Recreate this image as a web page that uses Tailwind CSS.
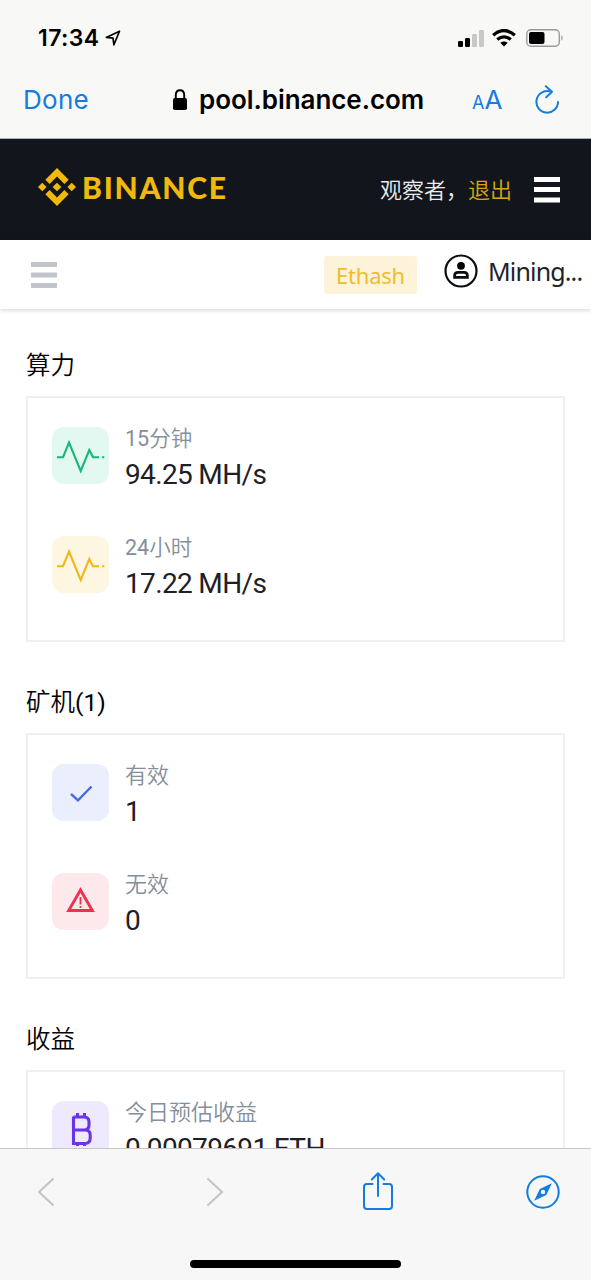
<!DOCTYPE html>
<html lang="zh-CN">
<head>
    <meta charset="UTF-8">
    <meta name="viewport" content="width=device-width, initial-scale=1.0">
    <title>Binance Pool</title>
    <script src="https://cdn.jsdelivr.net/npm/@tailwindcss/browser@4"></script>
</head>
<body class="bg-white">

<div class="w-[591px] h-[1280px] overflow-hidden flex flex-col font-['Roboto','Noto_Sans_CJK_SC',sans-serif] text-[#1e2026]">

    <!-- Browser top bar -->
    <div class="h-[139px] shrink-0 bg-[#f8f8f6] border-b border-[#a9b3b3] font-['Inter',sans-serif] text-black">
        <div class="h-[76px] pl-[38px] pr-[27px] flex items-center justify-between">
            <div class="flex items-center gap-[5px]">
                <span class="text-[23px] font-semibold tracking-[0.4px] leading-none">17:34</span>
                <svg class="w-4 h-4" viewBox="0 0 16 16" fill="none" stroke="black" stroke-width="1.7" stroke-linejoin="round"><path d="M14.5 1.2 L1.3 7.4 L8 8.1 L8.9 14.8 Z"/></svg>
            </div>
            <div class="flex items-center">
                <svg class="w-[27px] h-[17px]" viewBox="0 0 27 17">
                    <rect x="0" y="11" width="5" height="6" rx="1.3"/>
                    <rect x="7" y="8" width="5" height="9" rx="1.3"/>
                    <rect x="14" y="4" width="5" height="13" rx="1.3" fill="#c8c8c6"/>
                    <rect x="21" y="0" width="5" height="17" rx="1.3" fill="#c8c8c6"/>
                </svg>
                <svg class="w-6 h-[18px] ml-[7px] -mt-[1px]" viewBox="0 0 24 18" fill="none" stroke="black">
                    <path d="M1.2 6.2 Q12 -3 22.8 6.2" stroke-width="3.4"/>
                    <path d="M5.2 10.6 Q12 5 18.8 10.6" stroke-width="3.2"/>
                    <path d="M12 17.6 L8.3 13.8 Q12 11 15.7 13.8 Z" fill="black" stroke="none"/>
                </svg>
                <svg class="w-[38px] h-[18px] ml-[10px]" viewBox="0 0 38 18">
                    <rect x="0.8" y="0.8" width="32.5" height="16.4" rx="4" fill="none" stroke="#9b9b99" stroke-width="1.4"/>
                    <rect x="3" y="3" width="15.5" height="12" rx="2"/>
                    <path d="M35.4 6 q2.4 3 0 6 Z" fill="#8c8c8a"/>
                </svg>
            </div>
        </div>
        <div class="h-12 pl-[23px] pr-[30px] flex items-center">
            <span class="text-[26px] text-[#147ce0] w-[149px] tracking-[0.3px] -mt-[2px]">Done</span>
            <svg class="w-4 h-[21px] -mt-[1px]" viewBox="0 0 16 21"><rect x="1" y="9" width="14" height="12" rx="1.8"/><path d="M3.8 10 V6 Q3.8 1.2 8 1.2 Q12.2 1.2 12.2 6 V10" fill="none" stroke="black" stroke-width="1.9"/></svg>
            <span class="ml-[11px] -mt-[2px] text-[26px] font-[580] tracking-[-0.05px] w-[272px]">pool.binance.com</span>
            <span class="text-[#147ce0] flex items-baseline w-[64px] -mt-[2px] pl-[1px]"><span class="text-[18px]">A</span><span class="text-[26px] tracking-[-1px]">A</span></span>
            <svg class="w-6 h-[30px]" viewBox="0 0 24 30" fill="none" stroke="#147ce0" stroke-width="2" stroke-linecap="round" stroke-linejoin="round"><path d="M14.5 6.3 A10.8 10.8 0 1 0 23 17"/><path d="M10.8 1.2 L17 6.7 L11.2 12.2"/></svg>
        </div>
    </div>

    <!-- Site header -->
    <div class="h-[101px] shrink-0 bg-[#12161c] pl-[38px] pr-[31px] flex items-center">
        <svg class="w-[38px] h-[38px] -mt-[5px]" viewBox="0 0 126.6 126.6" fill="#f0b90b">
            <path d="M38.7 53.2 L63.3 28.6 L87.9 53.2 L102.2 38.9 L63.3 0 L24.4 38.9 Z"/>
            <path d="M0 63.3 L14.3 49 L28.6 63.3 L14.3 77.6 Z"/>
            <path d="M38.7 73.4 L63.3 98 L87.9 73.4 L102.2 87.7 L63.3 126.6 L24.4 87.7 Z"/>
            <path d="M98 63.3 L112.3 49 L126.6 63.3 L112.3 77.6 Z"/>
            <path d="M63.3 48.8 L77.8 63.3 L63.3 77.8 L48.8 63.3 Z"/>
        </svg>
        <span class="ml-[6px] -mt-[6px] w-[298px] font-['Lato',sans-serif] font-black text-[30px] tracking-[1.75px] leading-none text-[#f0b90b]">BINANCE</span>
        <span class="-mt-[4px] font-['Noto_Sans_CJK_SC',sans-serif] font-[350] text-[22px] leading-none text-[#eaecef] whitespace-nowrap w-[88px]">观察者，</span>
        <span class="-mt-[4px] font-['Noto_Sans_CJK_SC',sans-serif] font-[350] text-[22px] leading-none text-[#d9a60e] whitespace-nowrap">退出</span>
        <svg class="w-[26px] h-[27px] ml-auto" viewBox="0 0 26 27" fill="white"><path d="M0 1h26v5H0zM0 11h26v5H0zM0 21.5h26v5H0z"/></svg>
    </div>

    <!-- Account bar -->
    <div class="h-[69px] shrink-0 bg-white pl-[31px] flex items-center shadow-[0_2px_4px_rgba(0,0,0,0.13)]">
        <svg class="w-[26px] h-[26px]" viewBox="0 0 26 26" fill="#c1c5ca"><path d="M0 0h26v5H0zM0 10.5h26v5H0zM0 21h26v5H0z"/></svg>
        <div class="ml-[267px] w-[93px] h-[38px] rounded-[3px] bg-[#fcf3da] flex items-center justify-center font-['Noto_Sans',sans-serif] text-[22px] tracking-[-0.2px] text-[#f0bd2a] pt-[2px]">Ethash</div>
        <svg class="w-[34px] h-[34px] ml-[27px] -mt-[7px]" viewBox="0 0 34 34">
            <circle cx="17" cy="17" r="15.5" fill="none" stroke="#0b0e11" stroke-width="2.2"/>
            <circle cx="17" cy="11.8" r="3.9"/>
            <path d="M10.6 23.3 V21.6 Q10.6 18.4 14 18.4 H20 Q23.4 18.4 23.4 21.6 V23.3 Z" fill="none" stroke="#0b0e11" stroke-width="2.7"/>
        </svg>
        <span class="ml-[10px] -mt-[6px] font-['Noto_Sans',sans-serif] text-[25px] tracking-[-0.85px] text-[#1e2329]">Mining...</span>
    </div>

    <!-- Dashboard -->
    <div class="h-[839px] shrink-0 overflow-hidden px-[26px]">
        <h2 class="h-[87px] pt-[39px] text-[24.5px] leading-[36px] font-[350] text-black">算力</h2>
        <div class="h-[246px] border-2 border-[#eeeff0] pl-[24px] pt-[29px] flex flex-col gap-[52px]">
            <div class="flex h-[57px]">
                <div class="w-[57px] h-[57px] rounded-xl bg-[#e3f8f0]">
                    <svg viewBox="0 0 57 57" fill="none" stroke="#14b878" stroke-width="2.1"><path d="M5 30.2 H11 L17 15.5 L28.7 44 L37.3 23 L41 30.2 H47 M50 30.2 H52.3"/></svg>
                </div>
                <div class="ml-4 pt-px">
                    <div class="text-[21.5px] leading-[22px] text-[#848e9c] font-[350]"><span class="font-normal">15</span>分钟</div>
                    <div class="mt-[9px] text-[28px] leading-[32px] tracking-[-0.65px]">94.25 MH/s</div>
                </div>
            </div>
            <div class="flex h-[57px]">
                <div class="w-[57px] h-[57px] rounded-xl bg-[#fdf6e1]">
                    <svg viewBox="0 0 57 57" fill="none" stroke="#efb71b" stroke-width="2.1"><path d="M5 30.2 H11 L17 15.5 L28.7 44 L37.3 23 L41 30.2 H47 M50 30.2 H52.3"/></svg>
                </div>
                <div class="ml-4 pt-px">
                    <div class="text-[21.5px] leading-[22px] text-[#848e9c] font-[350]"><span class="font-normal">24</span>小时</div>
                    <div class="mt-[9px] text-[28px] leading-[32px] tracking-[-0.65px]">17.22 MH/s</div>
                </div>
            </div>
        </div>

        <h2 class="h-[91px] pt-[43px] text-[24.5px] leading-[36px] font-[350] text-black">矿机<span class="font-normal">(1)</span></h2>
        <div class="h-[246px] border-2 border-[#eeeff0] pl-[24px] pt-[29px] flex flex-col gap-[52px]">
            <div class="flex h-[57px]">
                <div class="w-[57px] h-[57px] rounded-xl bg-[#ebeefd]">
                    <svg viewBox="0 0 57 57" fill="none" stroke="#4b69e0" stroke-width="2.4"><path d="M19 30 L26 36.3 L39.5 22.5"/></svg>
                </div>
                <div class="ml-4 pt-px">
                    <div class="text-[22px] leading-[22px] text-[#848e9c] font-[350]">有效</div>
                    <div class="mt-[9px] text-[28px] leading-[32px]">1</div>
                </div>
            </div>
            <div class="flex h-[57px]">
                <div class="w-[57px] h-[57px] rounded-xl bg-[#fde9ec]">
                    <svg viewBox="0 0 57 57"><path d="M28.5 17 L40.3 37.5 H16.7 Z" fill="none" stroke="#f0304f" stroke-width="2.9"/><path d="M28.5 24 V31.5 M28.5 33 V35" stroke="#f0304f" stroke-width="1.8"/></svg>
                </div>
                <div class="ml-4 pt-px">
                    <div class="text-[22px] leading-[22px] text-[#848e9c] font-[350]">无效</div>
                    <div class="mt-[9px] text-[28px] leading-[32px]">0</div>
                </div>
            </div>
        </div>

        <h2 class="h-[91px] pt-[43px] text-[24.5px] leading-[36px] font-[350] text-black">收益</h2>
        <div class="h-[246px] border-2 border-[#eeeff0] pl-[24px] pt-[29px]">
            <div class="flex h-[57px]">
                <div class="w-[57px] h-[57px] rounded-xl bg-[#efe9fe]">
                    <svg viewBox="0 0 57 57" fill="none" stroke="#6a35e8" stroke-width="3.1"><path d="M21.5 15.5 V42.5 H33 Q38.2 42.5 38.2 37 V34 Q38.2 29 33 29 H21.5 M21.5 16 H32 Q37 16 37 21 V24 Q37 29 32 29 M25.5 12 V17 M32.5 12 V17 M25.5 41 V45 M32.5 41 V45"/></svg>
                </div>
                <div class="ml-4 pt-px">
                    <div class="text-[22px] leading-[22px] text-[#848e9c] font-[350]">今日预估收益</div>
                    <div class="mt-[9px] text-[28px] leading-[32px] tracking-[-0.65px]">0.00079691 ETH</div>
                </div>
            </div>
        </div>
    </div>

    <!-- Browser bottom bar -->
    <div class="h-[132px] shrink-0 bg-[#f7f7f7] border-t border-[#c6c6c8] flex flex-col justify-between">
        <div class="h-[85px] pl-[37px] flex items-center">
            <svg class="w-[18px] h-[30px]" viewBox="0 0 18 30" fill="none" stroke="#c3c3c3" stroke-width="2"><path d="M16.5 1.5 L2 15 L16.5 28.5"/></svg>
            <svg class="w-[18px] h-[30px] ml-[151px]" viewBox="0 0 18 30" fill="none" stroke="#c3c3c3" stroke-width="2"><path d="M1.5 1.5 L16 15 L1.5 28.5"/></svg>
            <svg class="w-[30px] h-[38px] ml-[139px] -mt-[2px]" viewBox="0 0 30 38" fill="none" stroke="#147ce0" stroke-width="2" stroke-linecap="round" stroke-linejoin="round"><path d="M9.5 12 H4 Q1 12 1 15 V34 Q1 37 4 37 H26 Q29 37 29 34 V15 Q29 12 26 12 H20.5"/><path d="M15 24 V1.5 M8.8 7.5 L15 1.2 L21.2 7.5"/></svg>
            <svg class="w-[34px] h-[34px] ml-[133px]" viewBox="0 0 34 34"><circle cx="17" cy="17" r="15.7" fill="none" stroke="#147ce0" stroke-width="2"/><path d="M25.8 8.2 L20.3 20 L8.2 25.8 L13.8 14 Z" fill="#147ce0"/><circle cx="17" cy="17" r="2.2" fill="#f7f7f7"/></svg>
        </div>
        <div class="w-[211px] h-2 mb-3 ml-[190px] rounded-full bg-black"></div>
    </div>
</div>

</body>
</html>
